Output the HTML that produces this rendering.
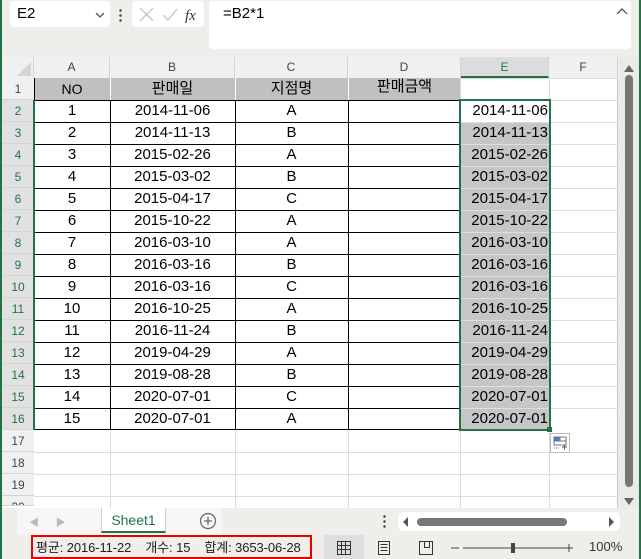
<!DOCTYPE html><html><head><meta charset="utf-8"><style>
*{margin:0;padding:0;box-sizing:border-box}
body{width:641px;height:559px;overflow:hidden;background:#f0eeeb;font-family:"Liberation Sans","Noto Sans CJK KR",sans-serif;position:relative;color:#000}
.a{position:absolute}
.c{position:absolute;font-size:15px;line-height:22px;text-align:center;white-space:nowrap}
.rh{position:absolute;left:2px;width:32px;height:22px;font-size:12px;line-height:22px;text-align:center;color:#444;background:#f0f0f0;border-bottom:1px solid #d4d4d4}
.ch{position:absolute;top:57px;height:21px;font-size:12px;line-height:21px;text-align:center;color:#444;background:#f0f0f0;border-right:1px solid #d4d4d4}
</style></head><body>
<div class="a" style="left:0;top:0;width:2px;height:559px;background:#217346"></div>
<div class="a" style="left:639px;top:0;width:2px;height:559px;background:#217346"></div>
<div class="a" style="left:10px;top:1px;width:100px;height:26px;background:#fff;border-radius:4px;font-size:15px;line-height:26px;padding-left:7px">E2</div>
<svg class="a" style="left:94px;top:10px" width="12" height="10"><path d="M2 3l4 4 4-4" stroke="#555" stroke-width="1.3" fill="none"/></svg>
<div class="a" style="left:119px;top:8px;width:3px;height:14px;background:radial-gradient(circle,#444 1px,transparent 1.5px) 0 0/3px 5px"></div>
<div class="a" style="left:132px;top:1px;width:72px;height:26px;background:#fff;border-radius:4px"></div>
<svg class="a" style="left:138px;top:6px" width="66" height="18"><path d="M2 2l13 13M15 2L2 15" stroke="#bbb" stroke-width="1.2"/><path d="M25 9l5 5 9-11" stroke="#bbb" stroke-width="1.2" fill="none"/><text x="47" y="14" font-family="Liberation Serif" font-style="italic" font-size="15" fill="#333">fx</text></svg>
<div class="a" style="left:209px;top:1px;width:422px;height:48px;background:#fff;border-radius:4px;font-size:15px;line-height:26px;padding-left:14px">=B2*1</div>
<svg class="a" style="left:616px;top:8px" width="12" height="8"><path d="M1 6l5-5 5 5" stroke="#444" stroke-width="1.2" fill="none"/></svg>
<div class="a" style="left:2px;top:57px;width:616px;height:451px;background:#fff;border-right:1px solid #c8c8c8"></div>
<div class="a" style="left:2px;top:57px;width:32px;height:21px;background:#f0f0f0;border-right:1px solid #d4d4d4"></div>
<svg class="a" style="left:16px;top:62px" width="16" height="15"><path d="M15 0V14H1z" fill="#d4d4d4"/></svg>
<div class="ch" style="left:34px;width:76px">A</div>
<div class="ch" style="left:110px;width:125px">B</div>
<div class="ch" style="left:235px;width:113px">C</div>
<div class="ch" style="left:348px;width:113px">D</div>
<div class="ch" style="left:461px;width:88px;background:#dcdcdc;border-bottom:2px solid #217346;color:#217346">E</div>
<div class="ch" style="left:549px;width:69px">F</div>
<svg class="a" style="left:34px;top:78px" width="584" height="430">
<g stroke="#dcdcdc" stroke-width="1">
<path d="M515.5 0V430M426.5 0V430M314.5 352V430M201.5 352V430M76.5 352V430M0 374.5H584M0 396.5H584M0 418.5H584M426 22.5H584M426 44.5H584M426 66.5H584M426 88.5H584M426 110.5H584M426 132.5H584M426 154.5H584M426 176.5H584M426 198.5H584M426 220.5H584M426 242.5H584M426 264.5H584M426 286.5H584M426 308.5H584M426 330.5H584M426 0.5H584"/>
</g>
<rect x="0" y="0" width="426" height="22" fill="#c0c0c0"/>
<g stroke="#000" stroke-width="1">
<path d="M0.5 0V352M76.5 0V352M201.5 0V352M314.5 0V352M426.5 22V352M0 22.5H426M0 44.5H426M0 66.5H426M0 88.5H426M0 110.5H426M0 132.5H426M0 154.5H426M0 176.5H426M0 198.5H426M0 220.5H426M0 242.5H426M0 264.5H426M0 286.5H426M0 308.5H426M0 330.5H426M0 351.5H426"/>
</g>
<path d="M76.5 0V22M201.5 0V22M314.5 0V22" stroke="#fff" stroke-width="1"/>
<rect x="427" y="44" width="88" height="308" fill="#c6c6c6"/>
<path d="M427 44.5H515M427 66.5H515M427 88.5H515M427 110.5H515M427 132.5H515M427 154.5H515M427 176.5H515M427 198.5H515M427 220.5H515M427 242.5H515M427 264.5H515M427 286.5H515M427 308.5H515M427 330.5H515" stroke="#ddd"/>
<rect x="426" y="22" width="90" height="330" fill="none" stroke="#217346" stroke-width="2"/>
<rect x="513" y="349" width="5" height="5" fill="#217346"/>
</svg>
<div class="a" style="left:550px;top:433px;width:20px;height:20px;border:1px solid #bbb;background:#fff"></div>
<svg class="a" style="left:553px;top:436px" width="15" height="15"><rect x="1" y="1" width="6" height="4" fill="#3b7ded"/><rect x="1" y="1" width="12" height="8" fill="none" stroke="#777" stroke-width="1"/><path d="M7 1v4M1 5h12" stroke="#777"/><path d="M9 11h5M11.5 8.5v5" stroke="#555"/><path d="M1 12h6" stroke="#777" stroke-dasharray="1 1"/></svg>
<div id="rh"></div>
<div id="cells"></div>
<div class="a" style="left:33px;top:100px;width:2px;height:330px;background:#217346"></div>
<div class="a" style="left:619px;top:57px;width:20px;height:451px;background:#eceae6"></div>
<svg class="a" style="left:622px;top:62px" width="14" height="12"><path d="M2 10L7 3l5 7z" fill="#666"/></svg>
<div class="a" style="left:625px;top:75px;width:8px;height:412px;background:#777;border-radius:4px"></div>
<svg class="a" style="left:622px;top:496px" width="14" height="12"><path d="M2 2L7 9l5-7z" fill="#666"/></svg>
<div class="a" style="left:2px;top:508px;width:637px;height:27px;background:#f0eeeb"></div>
<div class="a" style="left:17px;top:508px;width:205px;height:27px;background:#f7f6f4"></div>
<div class="a" style="left:29px;top:514px;font-size:10px;color:#bbb">&#9664;&nbsp;&nbsp;&nbsp;&nbsp;&nbsp;&nbsp;&#9654;</div>
<div class="a" style="left:101px;top:508px;width:65px;height:25px;background:#fff;border-left:1px solid #ccc;border-right:1px solid #ccc;border-bottom:2px solid #217346;font-size:14px;color:#217346;text-align:center;line-height:24px">Sheet1</div>
<svg class="a" style="left:199px;top:512px" width="18" height="18"><circle cx="9" cy="9" r="7.5" fill="none" stroke="#666" stroke-width="1.2"/><path d="M5 9h8M9 5v8" stroke="#666" stroke-width="1.3"/></svg>
<div class="a" style="left:383px;top:514px;width:3px;height:14px;background:radial-gradient(circle,#444 1px,transparent 1.5px) 0 0/3px 5px"></div>
<div class="a" style="left:398px;top:512px;width:222px;height:19px;background:#fff;border-radius:5px"></div>
<svg class="a" style="left:402px;top:516px" width="214" height="12"><path d="M6 1L1 6l5 5z" fill="#555"/><rect x="15" y="2" width="150" height="8" rx="4" fill="#777"/><path d="M207 1l5 5-5 5z" fill="#555"/></svg>
<div class="a" style="left:31px;top:535px;width:281px;height:24px;border:2px solid #e00;font-size:13px;line-height:22px;padding-left:3px;white-space:nowrap;color:#222;letter-spacing:-0.1px">평균: 2016-11-22&nbsp;&nbsp;&nbsp;&nbsp;개수: 15&nbsp;&nbsp;&nbsp;&nbsp;합계: 3653-06-28</div>
<div class="a" style="left:324px;top:535px;width:40px;height:24px;background:#dedede"></div>
<svg class="a" style="left:336px;top:540px" width="100" height="16"><g fill="none" stroke="#333" stroke-width="1"><path d="M1.5 1.5h13v13h-13zM1.5 5.5h13M1.5 9.5h13M5.5 1.5v13M9.5 1.5v13"/><path d="M42.5 1.5h11v13h-11zM44.5 4.5h7M44.5 7.5h7M44.5 10.5h7"/><path d="M83.5 1.5h13v13h-13zM88.5 1.5v6h5v-6"/></g></svg>
<svg class="a" style="left:450px;top:540px" width="130" height="16"><path d="M1 8h8M13 8h110M119 4v8M115 8h8" stroke="#444" stroke-width="1"/><rect x="61" y="3" width="4" height="10" fill="#444"/></svg>
<div class="a" style="left:589px;top:539px;font-size:13px;line-height:16px;color:#333">100%</div>
<script>
var data=[["1","2014-11-06","A"],["2","2014-11-13","B"],["3","2015-02-26","A"],["4","2015-03-02","B"],["5","2015-04-17","C"],["6","2015-10-22","A"],["7","2016-03-10","A"],["8","2016-03-16","B"],["9","2016-03-16","C"],["10","2016-10-25","A"],["11","2016-11-24","B"],["12","2019-04-29","A"],["13","2019-08-28","B"],["14","2020-07-01","C"],["15","2020-07-01","A"]];
var h="",c="";
for(var i=1;i<=20;i++){var t=78+(i-1)*22;var s=(i>=2&&i<=16)?"background:#e1e1e1;color:#217346;":"";if(i==20)s+="height:10px;overflow:hidden;";h+='<div class="rh" style="top:'+t+'px;'+s+'">'+i+'</div>';}
c+='<div class="c" style="left:34px;top:78px;width:76px;font-size:14px">NO</div><div class="c" style="left:110px;top:78px;width:125px">판매일</div><div class="c" style="left:235px;top:78px;width:113px">지점명</div><div class="c" style="left:348px;top:76px;width:113px">판매금액</div>';
for(var j=0;j<15;j++){var t=100+j*22;var d=data[j];c+='<div class="c" style="left:34px;top:'+t+'px;width:76px">'+d[0]+'</div><div class="c" style="left:110px;top:'+t+'px;width:125px">'+d[1]+'</div><div class="c" style="left:235px;top:'+t+'px;width:113px">'+d[2]+'</div><div class="c" style="left:461px;top:'+t+'px;width:87px;text-align:right">'+d[1]+'</div>';}
document.getElementById("rh").innerHTML=h;document.getElementById("cells").innerHTML=c;
</script>
</body></html>
